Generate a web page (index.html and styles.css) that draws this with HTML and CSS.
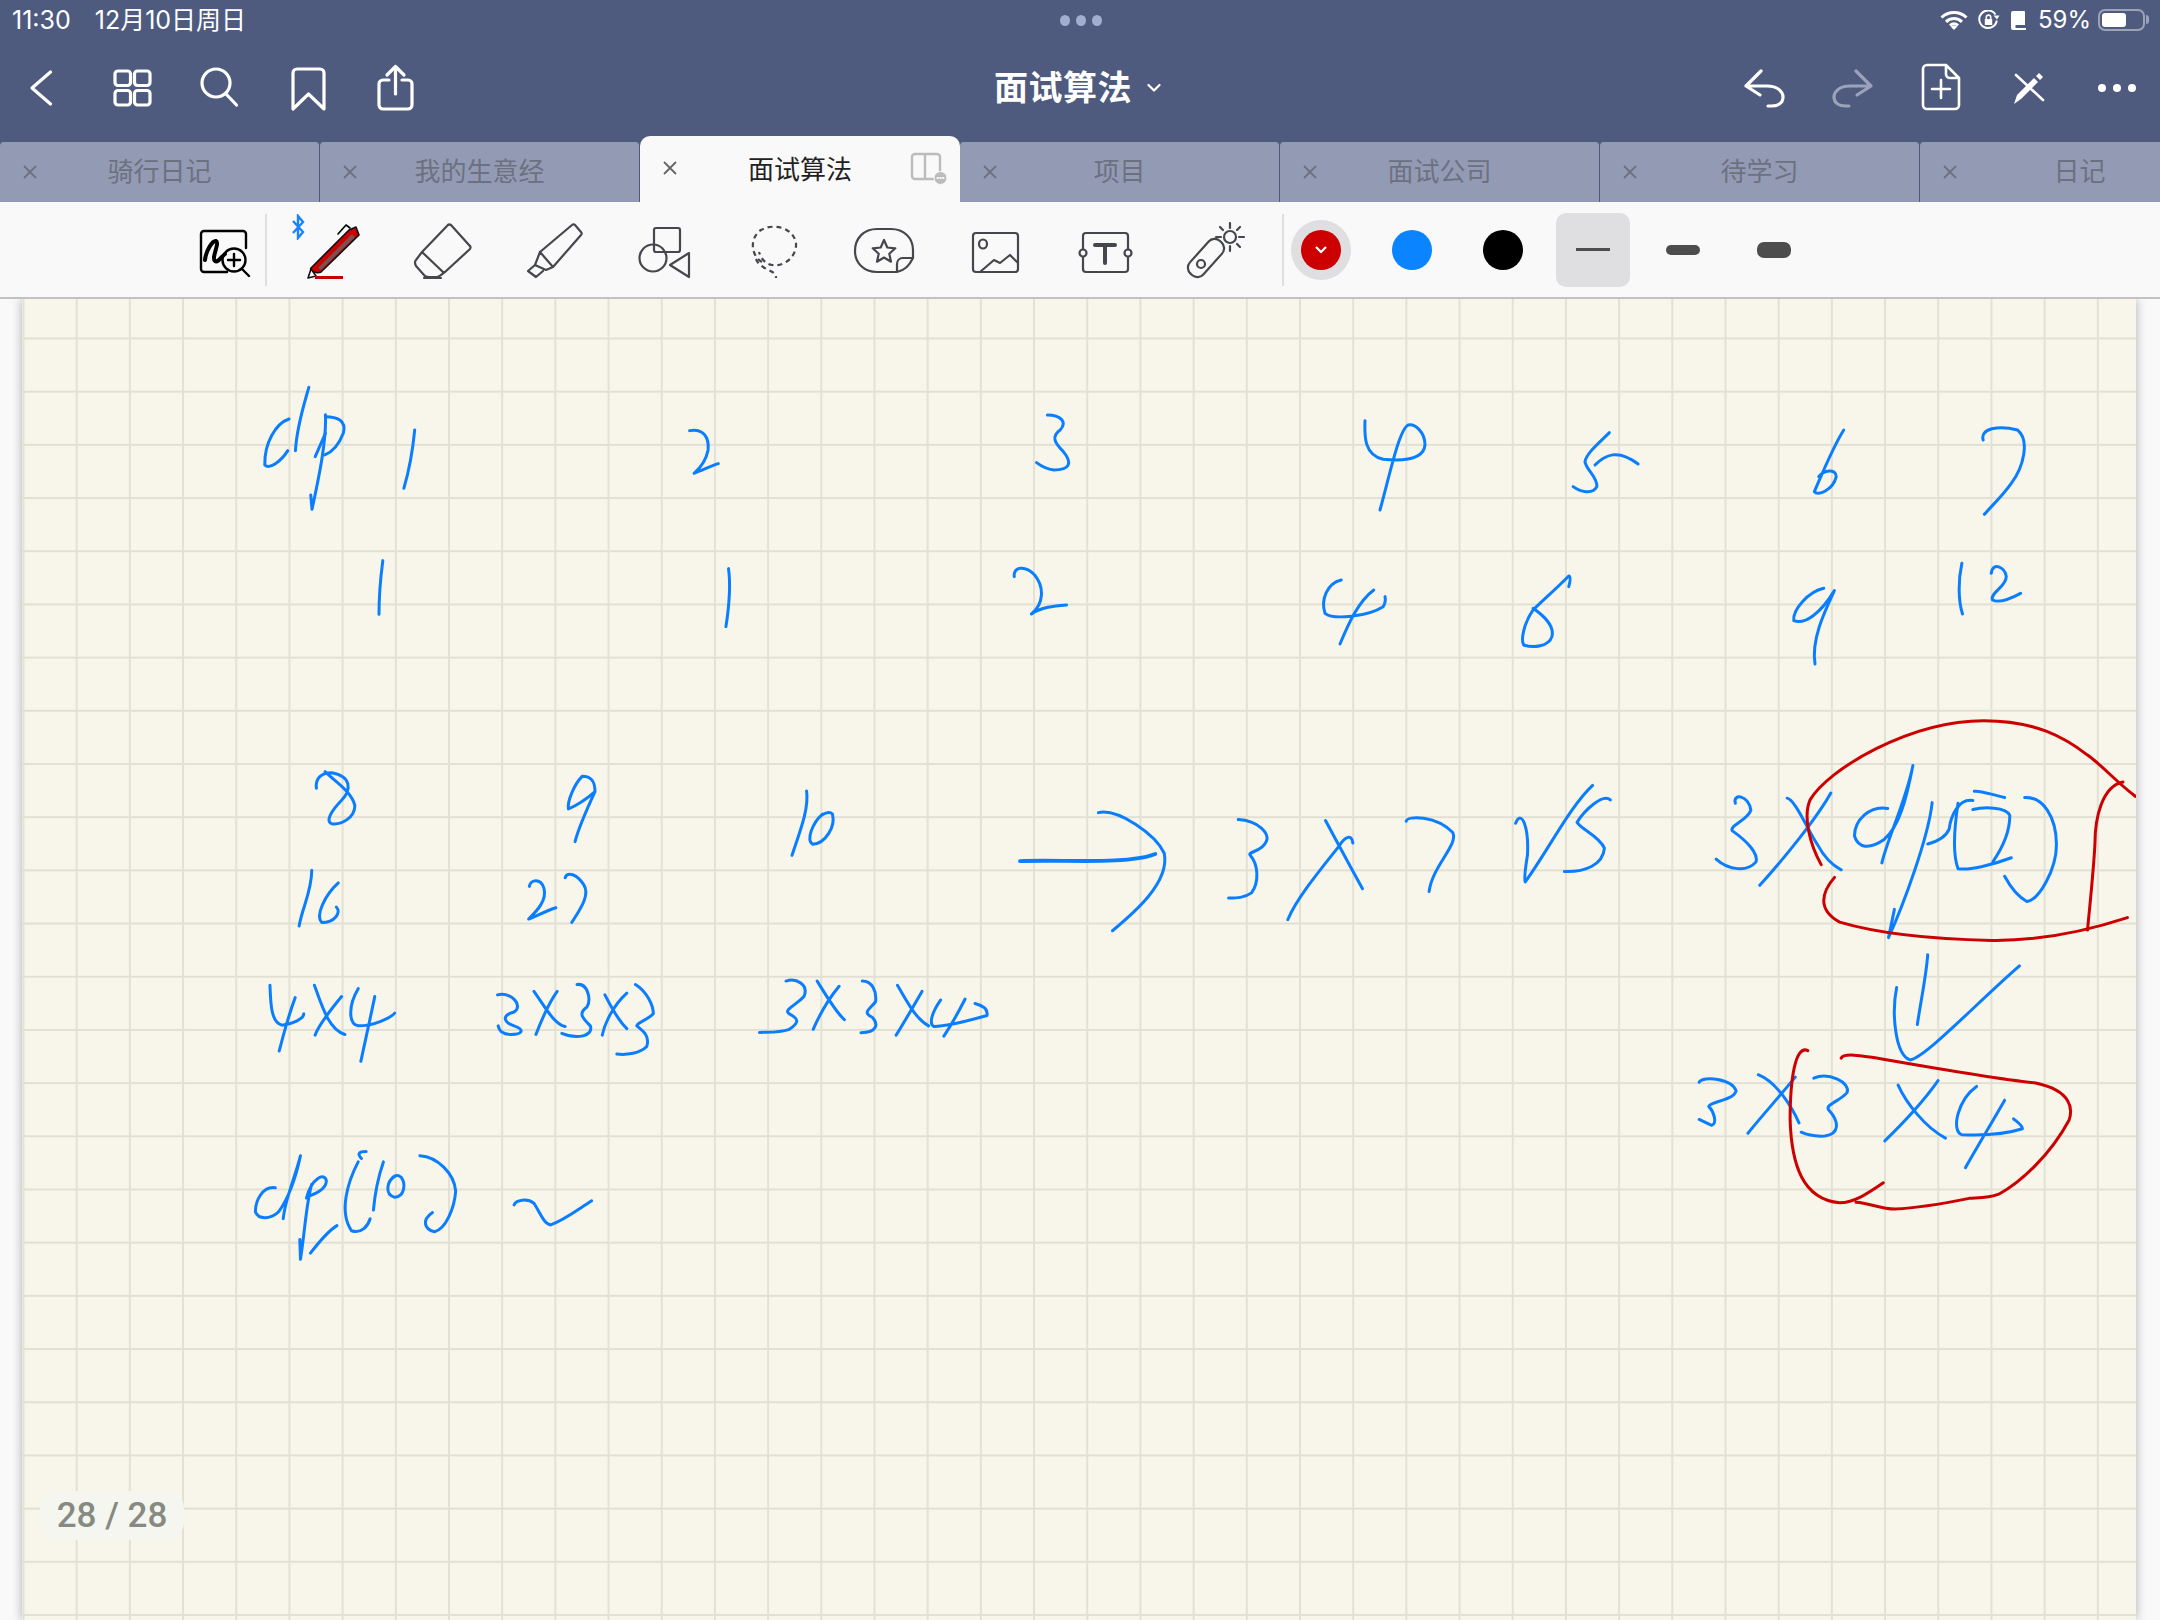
FILE: index.html
```html
<!DOCTYPE html>
<html lang="zh-CN">
<head>
    <meta charset="UTF-8">
    <title>面试算法</title>
    <link rel="stylesheet" href="styles.css">
</head>
<body>
    <header class="appbar">
        <div class="statusbar">
            <div class="status-left"><span>11:30</span><span>12月10日周日</span></div>
            <div class="status-dots"><i></i><i></i><i></i></div>
            <div class="status-right">
                <svg class="st-wifi" width="28" height="20" viewBox="0 0 28 20"><path d="M1.500 7.500C8.500 .8 19.500 .8 26.500 7.500M6 11.800C10.500 7.500 17.500 7.500 22 11.800M10 15.500C12.500 13.300 15.500 13.300 18 15.500"/><path class="solid" d="M14 20l-3.200-3.300c1.900-1.500 4.500-1.500 6.400 0z"/></svg>
                <svg class="st-lock" width="22" height="20" viewBox="0 0 22 20"><path class="mid" d="M17.500 4.500A8.800 8.800 0 1 0 18.800 10.500"/><path class="solid" d="M15.500 5.500h6l-2.500 4zM6.800 9h7.400v6H6.800z"/><path class="thin" d="M8.300 9V7.300a2.200 2.200 0 0 1 4.400 0V9"/></svg>
                <svg class="st-book" width="16" height="19" viewBox="0 0 16 19"><path class="solid" d="M2 0h11a1 1 0 0 1 1 1v13H4.500v3H15v2H2a2 2 0 0 1-2-2V2a2 2 0 0 1 2-2z"/></svg>
                <span class="st-pct">59%</span>
                <div class="battery"><div class="battery-fill"></div></div>
            </div>
        </div>

        <nav class="navbar">
            <div class="nav-left">
                <svg class="nav-icon nav-back" viewBox="0 0 60 60"><path d="M39.500 14L21 30l18.500 16"/></svg>
                <svg class="nav-icon" viewBox="0 0 60 60"><rect x="13" y="13" width="15.500" height="14.500" rx="3"/><rect x="32.500" y="13" width="15.500" height="14.500" rx="3"/><rect x="13" y="32.500" width="15.500" height="14.500" rx="3"/><rect x="32.500" y="32.500" width="15.500" height="14.500" rx="3"/></svg>
                <svg class="nav-icon" viewBox="0 0 60 60"><circle cx="26" cy="25" r="14"/><path d="M36 36l10.500 11"/></svg>
                <svg class="nav-icon" viewBox="0 0 60 60"><path d="M15 51V15a4 4 0 0 1 4-4h23a4 4 0 0 1 4 4v36L30.500 36z"/></svg>
                <svg class="nav-icon" viewBox="0 0 60 60"><path d="M23 22h-6a4 4 0 0 0-4 4v21a4 4 0 0 0 4 4h25a4 4 0 0 0 4-4V26a4 4 0 0 0-4-4h-6M29.500 36V9M21 17l8.500-8.500L38 17"/></svg>
            </div>
            <div class="nav-title">
                <span>面试算法</span>
                <svg class="nav-chevron" width="14" height="10" viewBox="0 0 14 10"><path d="M1.500 2L7 7.500 12.500 2"/></svg>
            </div>
            <div class="nav-right">
                <svg class="nav-icon" viewBox="0 0 60 60"><path d="M26 13L11 28l14 9M11 28h21c11 0 16 6 16 11 0 6-5 9-12 9h-3"/></svg>
                <svg class="nav-icon is-off" viewBox="0 0 60 60"><path d="M33 13l15 15-14 9M48 28H27C16 28 11 34 11 39c0 6 5 9 12 9h3"/></svg>
                <svg class="nav-icon nav-thin" viewBox="0 0 60 60"><path d="M16 7h19l13 13v27a4 4 0 0 1-4 4H16a4 4 0 0 1-4-4V11a4 4 0 0 1 4-4zM35 7v9a4 4 0 0 0 4 4h9M21 31h18M30 22v18"/></svg>
                <svg class="nav-icon nav-thin" viewBox="0 0 60 60"><path d="M17 17l27 25"/><path class="solid" d="M15 46l3-9 17-17 4 4-17 17zM37 18l3-3 4 4-3 3z"/></svg>
                <svg class="nav-icon" viewBox="0 0 60 60"><circle class="solid" cx="15" cy="30" r="4"/><circle class="solid" cx="30" cy="30" r="4"/><circle class="solid" cx="45" cy="30" r="4"/></svg>
            </div>
        </nav>

        <div class="tabs">
            <div class="tab"><svg class="tab-x" viewBox="0 0 14 14"><path d="M1 1l12 12M13 1L1 13"/></svg><span>骑行日记</span></div>
            <div class="tab"><svg class="tab-x" viewBox="0 0 14 14"><path d="M1 1l12 12M13 1L1 13"/></svg><span>我的生意经</span></div>
            <div class="tab active">
                <svg class="tab-x" viewBox="0 0 14 14"><path d="M1 1l12 12M13 1L1 13"/></svg>
                <span>面试算法</span>
                <svg class="tab-split" width="40" height="34" viewBox="0 0 40 34"><path d="M8 2h22a3 3 0 0 1 3 3v16M18 2v25H8a3 3 0 0 1-3-3V5a3 3 0 0 1 3-3M18 27h9"/><circle class="solid" cx="33.500" cy="26" r="6.500"/><path class="dots" d="M30.500 26h.5M33.300 26h.5M36 26h.5"/></svg>
            </div>
            <div class="tab"><svg class="tab-x" viewBox="0 0 14 14"><path d="M1 1l12 12M13 1L1 13"/></svg><span>项目</span></div>
            <div class="tab"><svg class="tab-x" viewBox="0 0 14 14"><path d="M1 1l12 12M13 1L1 13"/></svg><span>面试公司</span></div>
            <div class="tab"><svg class="tab-x" viewBox="0 0 14 14"><path d="M1 1l12 12M13 1L1 13"/></svg><span>待学习</span></div>
            <div class="tab"><svg class="tab-x" viewBox="0 0 14 14"><path d="M1 1l12 12M13 1L1 13"/></svg><span>日记</span></div>
        </div>
    </header>

    <div class="toolbar">
        <svg class="tool zoom-tool" viewBox="0 0 70 80">
            <path class="k" d="M38 60H15a3 3 0 0 1-3-3V22a3 3 0 0 1 3-3h39a3 3 0 0 1 3 3v14"/>
            <path class="k fat" d="M16 48c1-10 8-20 11-19 4 2-5 17-1 20 3 2 6-4 10-7"/>
            <circle class="k" cx="45" cy="48" r="11.500"/>
            <path class="k" d="M53 57l7 7M45 42v12M39 48h12"/>
        </svg>
        <div class="bar-divider"></div>
        <div class="tool-group">
            <div class="pen-slot">
                <svg class="bt-badge" width="14" height="26" viewBox="0 0 14 26"><path d="M2 7l10 11-5 6V2l5 6L2 19"/></svg>
                <svg class="tool" viewBox="0 0 70 80">
                    <path class="pen-body" d="M13 56L51 18l7-3 3 8-38 37c-4 2-12-1-10-4z"/>
                    <path class="pen-side" d="M20 56L54 22l3 3-34 33z"/>
                    <path class="pen-tip" d="M13 57l-3 9 8-2z"/>
                    <path class="k thin" d="M40 22l8-9 4 3"/>
                    <path class="pen-line" d="M17 65.500h28"/>
                </svg>
            </div>
            <svg class="tool" viewBox="0 0 70 80"><path d="M14 40L39 14a3 3 0 0 1 4-1l18 20a3 3 0 0 1 1 4L37 60a2 2 0 0 1-2 0zM14 40l-6 8c-2 2-1 4 0 6l8 9c1 2 3 2 5 2h8c2 0 3-1 8-5M16 66h17"/></svg>
            <svg class="tool" viewBox="0 0 70 80"><path d="M21 40L53 13a2 2 0 0 1 3 0l6 7a2 2 0 0 1 0 3L34 55zM21 40l-5 13 11 5 7-3M16 53l-7 6 8 6 7-6"/></svg>
            <svg class="tool" viewBox="0 0 70 80"><rect x="25" y="16" width="26" height="24" rx="2"/><circle cx="24" cy="46" r="13.500"/><path d="M60 41L41 53l19 12z"/></svg>
            <svg class="tool" viewBox="0 0 70 80"><path class="dash" d="M23 50C12 44 10 26 22 18 34 11 54 15 57 31 58 44 46 55 33 53 26 52 22 46 20 40"/><path class="dash" d="M17 47c3 8 12 10 18 14 2 1 2 3 2 5"/></svg>
            <svg class="tool" viewBox="0 0 70 80"><path d="M28 17h14c13 0 22 9 22 21v8C60 54 56 58 48 60H28C15 60 6 51 6 39 6 26 15 17 28 17zM64 46H54c-4 0-6 3-6 6v8"/><path d="M35 28l3.300 7.500 8 .8-6 5.400 1.700 8-7-4.200-7 4.200 1.700-8-6-5.400 8-.8z"/></svg>
            <svg class="tool" viewBox="0 0 70 80"><rect x="13" y="21" width="45" height="39" rx="3"/><ellipse cx="23" cy="32" rx="4" ry="4.500"/><path d="M20 60l14-12 6 3 10-8 7 7"/></svg>
            <svg class="tool" viewBox="0 0 70 80"><path d="M13 37V24a3 3 0 0 1 3-3h39a3 3 0 0 1 3 3v13M13 45v12a3 3 0 0 0 3 3h39a3 3 0 0 0 3-3V45"/><circle cx="13" cy="41" r="3.500"/><circle cx="58" cy="41" r="3.500"/><path class="fat" d="M25 33h20M35 33v18"/></svg>
            <svg class="tool" viewBox="0 0 70 80"><rect x="-9" y="-22" width="18" height="44" rx="8" transform="translate(26 46) rotate(42)"/><circle cx="21" cy="52" r="4"/><circle cx="50" cy="25" r="6"/><path d="M50 11v5M50 34v5M36 25h5M59 25h5M40 15l3 3M60 15l-3 3M60 35l-3-3"/></svg>
        </div>
        <div class="bar-divider divider-end"></div>
        <div class="swatches">
            <div class="swatch-slot selected"><div class="swatch red"><svg width="14" height="10" viewBox="0 0 14 10"><path d="M2 2l5 5 5-5"/></svg></div></div>
            <div class="swatch-slot"><div class="swatch blue"></div></div>
            <div class="swatch-slot"><div class="swatch black"></div></div>
        </div>
        <div class="strokes">
            <div class="stroke-btn selected"><div class="stroke s1"></div></div>
            <div class="stroke-btn"><div class="stroke s2"></div></div>
            <div class="stroke-btn"><div class="stroke s3"></div></div>
        </div>
    </div>

    <main class="page-area">
        <div class="paper">
            <svg class="ink" width="2114" height="1321" viewBox="22 299 2114 1321">
                <g class="blue" transform="translate(180 200) scale(.6378 .3333)">
                    <path d="M171 657C150 670 132 730 133 795C140 810 158 785 169 752"/>
                    <path d="M202 562C195 610 183 680 181 752"/>
                    <path d="M228 644C230 720 218 830 207 928L205 885"/>
                    <path d="M228 650C245 650 262 660 256 700C250 730 240 755 227 765M212 770L228 700"/>
                    <path d="M368 690C365 750 358 820 351 865"/>
                    <path d="M799 692C820 685 830 710 828 750C825 780 815 805 806 820C820 810 832 798 844 791"/>
                    <path d="M1360 645C1380 645 1392 665 1380 690C1365 710 1372 730 1385 755C1400 790 1395 810 1370 810C1358 808 1350 798 1343 788"/>
                    <path d="M318 1082C314 1140 312 1200 312 1243"/>
                    <path d="M860 1106C864 1160 860 1230 856 1280"/>
                    <path d="M1308 1130C1306 1100 1325 1095 1340 1125C1355 1160 1355 1210 1335 1242C1350 1222 1370 1218 1390 1215"/>
                </g>
                <g class="blue" transform="translate(1180 380) scale(.625 .3333)">
                    <path d="M296 122C295 170 295 225 325 238C365 245 390 235 392 195C392 155 375 130 365 135C350 150 335 290 320 390"/>
                    <path d="M687 158C670 190 650 220 648 245C650 270 668 290 667 320C660 345 640 335 629 320M664 255C680 225 700 205 733 252"/>
                    <path d="M1062 150C1045 200 1030 270 1015 335C1020 350 1045 330 1050 290C1050 265 1030 270 1022 290"/>
                    <path d="M1285 180C1280 145 1310 135 1340 150C1360 180 1350 260 1330 310C1315 350 1295 385 1287 403"/>
                    <path d="M258 600C235 610 225 660 232 700C245 720 300 710 325 680C330 665 328 650 328 650M310 630C285 665 270 730 256 792"/>
                    <path d="M622 620C625 600 625 590 622 588C600 630 575 670 565 690C550 730 545 780 550 795C565 805 590 800 595 770C600 735 580 705 565 685"/>
                    <path d="M1030 625C1005 635 980 690 982 722C1000 735 1025 700 1047 632C1030 700 1010 780 1016 852"/>
                    <path d="M1251 550C1245 600 1245 660 1252 702"/>
                    <path d="M1298 580C1300 545 1320 560 1322 590C1322 620 1295 640 1300 660C1310 670 1330 655 1345 640"/>
                </g>
                <g class="blue" transform="translate(0 740) scale(.6633 .3444)">
                    <path d="M490 92C505 120 530 150 535 190C535 225 515 247 500 243C490 235 500 205 515 175C530 145 530 105 500 95C485 95 475 110 477 140"/>
                    <path d="M897 150C897 130 895 105 878 105C865 130 855 180 857 200C870 190 885 170 897 150C885 200 873 250 867 295"/>
                    <path d="M1216 148C1220 200 1205 270 1194 335"/>
                    <path d="M1240 215C1225 240 1215 290 1225 303C1245 300 1260 250 1255 215C1250 205 1240 215 1235 225"/>
                    <path d="M470 378C470 440 455 490 451 540"/>
                    <path d="M510 415C490 450 475 510 485 530C505 530 515 500 507 485"/>
                    <path d="M798 425C800 405 815 400 820 430C825 465 810 495 797 520C810 510 825 495 838 487"/>
                    <path d="M852 400C855 380 870 390 880 420C890 450 875 490 862 530"/>
                    <path d="M407 712C408 760 408 820 425 828C440 825 458 810 458 795M445 748C435 800 428 850 421 903"/>
                    <path d="M474 712C485 770 495 840 520 855M515 745C500 780 480 830 475 857"/>
                    <path d="M540 722C525 770 525 825 540 830C565 830 590 805 595 793M565 745C558 810 550 880 544 933"/>
                    <path d="M750 740C770 730 790 770 775 790C755 800 760 820 775 830C790 840 790 855 770 855C755 855 752 840 751 830"/>
                    <path d="M805 730C820 770 835 825 852 832M840 730C825 770 815 820 808 855"/>
                    <path d="M870 710C885 705 892 750 885 775C870 795 880 810 890 830C895 860 870 870 847 852"/>
                    <path d="M912 740C920 770 930 810 945 838M945 735C925 770 912 820 908 857"/>
                    <path d="M958 710C975 730 985 770 985 795C975 815 960 820 960 830C970 845 980 860 975 890C965 910 945 915 930 912"/>
                    <path d="M1185 700C1200 690 1220 710 1212 745C1200 770 1180 785 1190 795C1205 810 1205 820 1190 840C1175 850 1160 848 1145 849"/>
                    <path d="M1232 700C1245 740 1260 790 1273 812M1265 715C1250 750 1235 800 1226 840"/>
                    <path d="M1300 700C1315 700 1322 730 1320 760C1310 785 1300 790 1315 805C1325 825 1322 850 1298 850"/>
                    <path d="M1353 712C1365 750 1380 810 1400 830M1390 730C1375 780 1360 830 1351 857"/>
                    <path d="M1418 755C1405 790 1400 825 1408 832C1430 830 1460 815 1488 800C1490 780 1480 770 1470 765M1455 752C1445 790 1435 825 1423 860"/>
                    <path d="M415 1300C395 1295 385 1340 385 1370C390 1395 410 1390 420 1370C435 1330 445 1280 453 1207C445 1270 430 1330 427 1390"/>
                    <path d="M470 1290C462 1340 460 1420 453 1508L452 1450M462 1330C470 1270 490 1255 492 1280C492 1300 480 1315 465 1325"/>
                    <path d="M468 1490C480 1460 495 1425 508 1410"/>
                    <path d="M552 1195C538 1195 540 1205 545 1215M540 1225C525 1280 510 1370 530 1425C545 1435 555 1410 558 1390"/>
                    <path d="M578 1225C570 1270 565 1320 563 1365"/>
                    <path d="M597 1265C582 1280 580 1320 595 1328C610 1325 612 1290 605 1270C600 1262 595 1265 592 1270"/>
                    <path d="M633 1207C660 1210 685 1260 687 1310C685 1360 672 1420 655 1428C640 1420 635 1395 652 1372"/>
                    <path d="M775 1350C778 1335 795 1330 805 1345C815 1375 820 1405 830 1408C850 1395 870 1365 892 1338"/>
                </g>
                <g class="blue" transform="translate(1000 700) scale(.7398 .3444)">
                    <path class="bold" d="M27 468C80 462 170 480 210 447"/>
                    <path d="M133 327C160 315 210 390 222 445C230 530 180 620 152 670"/>
                    <path d="M322 347C350 350 365 390 360 410C355 440 335 440 338 450C350 480 350 530 340 560C330 575 320 575 309 575"/>
                    <path d="M440 350C455 410 475 490 490 548M477 415C475 385 465 400 458 425C430 500 400 580 389 638"/>
                    <path d="M549 352C550 335 590 335 612 385C620 420 585 480 580 556"/>
                    <path d="M697 358C705 315 715 370 713 450C710 490 708 520 710 528C740 440 770 310 801 248"/>
                    <path d="M825 290C815 270 790 320 780 355C785 375 810 395 817 430C815 480 790 500 763 498"/>
                    <path d="M994 300C990 270 1012 275 1015 320C1010 350 985 365 990 380C1010 410 1025 445 1022 470C1010 500 985 495 968 462"/>
                    <path d="M1064 285C1075 290 1090 370 1105 420C1115 460 1125 480 1137 493M1123 270C1105 340 1060 460 1027 538"/>
                    <path d="M1200 315C1175 305 1155 350 1155 395C1160 430 1175 435 1195 405C1215 370 1225 290 1234 190C1225 290 1200 400 1192 473"/>
                    <path d="M1260 298C1255 400 1220 600 1201 690L1209 608"/>
                    <path d="M1315 292C1295 285 1285 340 1283 375C1278 400 1265 412 1254 418"/>
                    <path d="M1317 265C1325 262 1340 275 1358 283M1315 318C1330 310 1360 310 1365 335C1365 380 1355 430 1342 470M1295 300C1290 370 1288 450 1295 490C1310 495 1340 480 1367 458"/>
                    <path d="M1385 283C1410 280 1428 340 1428 420C1428 490 1405 580 1388 585C1375 570 1365 540 1358 512"/>
                    <path d="M1254 740C1252 800 1245 870 1240 942"/>
                    <path d="M1212 835C1205 910 1210 1030 1230 1045C1250 1040 1320 880 1378 772"/>
                    <path d="M945 1110C950 1090 990 1100 995 1135C990 1165 960 1165 958 1180C965 1195 970 1230 962 1235L945 1218"/>
                    <path d="M1025 1088C1050 1110 1070 1180 1080 1228M1075 1095C1050 1160 1025 1220 1011 1258"/>
                    <path d="M1100 1098C1120 1080 1150 1110 1145 1140C1135 1165 1115 1175 1120 1190C1135 1225 1135 1260 1115 1266C1100 1268 1090 1262 1083 1255"/>
                    <path d="M1214 1118C1225 1170 1250 1240 1278 1272M1268 1105C1250 1160 1220 1230 1196 1280"/>
                    <path d="M1320 1122C1295 1160 1285 1250 1300 1262C1330 1265 1360 1260 1382 1245C1382 1235 1375 1225 1370 1216M1358 1162C1340 1230 1320 1300 1305 1358"/>
                </g>
                <g class="red" transform="translate(1000 700) scale(.7398 .3444)">
                    <path d="M1110 478C1095 420 1085 340 1095 290C1120 200 1230 60 1330 60C1400 60 1440 110 1470 160C1490 190 1510 240 1535 280"/>
                    <path d="M1128 515C1110 560 1105 610 1135 645C1190 680 1270 695 1340 698C1410 700 1470 670 1524 632"/>
                    <path d="M1518 238C1490 250 1480 340 1480 420C1478 500 1473 600 1470 668"/>
                    <path d="M1092 1018C1075 1000 1068 1100 1068 1220C1070 1350 1085 1450 1135 1460C1155 1460 1175 1430 1194 1402"/>
                    <path d="M1137 1040C1140 1025 1160 1030 1200 1045C1280 1075 1370 1105 1400 1112C1450 1135 1450 1190 1445 1220C1420 1320 1380 1400 1350 1435C1335 1448 1320 1445 1310 1447C1280 1460 1240 1475 1210 1478C1190 1478 1175 1460 1157 1458"/>
                </g>
            </svg>
            <div class="page-num">28 / 28</div>
        </div>
    </main>
</body>
</html>
```

FILE: styles.css
```css
* {
    box-sizing: border-box;
}
html, body {
    margin: 0;
    padding: 0;
}
body {
    width: 2160px;
    height: 1620px;
    overflow: hidden;
    display: flex;
    flex-direction: column;
    background: #f9f9f9;
    font-family: Inter, "Noto Sans CJK SC", sans-serif;
}
svg {
    display: block;
    flex: none;
}

/* top blue part */
.appbar {
    background: #4e5b7f;
    color: #fff;
}
.statusbar {
    height: 40px;
    padding: 0 11px 0 12px;
    display: grid;
    grid-template-columns: 1fr auto 1fr;
    align-items: center;
    font-size: 25px;
    line-height: 40px;
}
.status-left {
    display: flex;
    gap: 24px;
}
.status-dots {
    display: flex;
    gap: 6px;
}
.status-dots i {
    width: 10px;
    height: 11px;
    border-radius: 50%;
    background: #a2aed0;
}
.status-right {
    display: flex;
    align-items: center;
    justify-content: flex-end;
}
.status-right svg path {
    fill: none;
    stroke: #fff;
    stroke-width: 3;
}
.status-right svg path.solid {
    fill: #fff;
    stroke: none;
}
.status-right svg path.mid {
    stroke-width: 2;
}
.status-right svg path.thin {
    stroke-width: 1.6;
}
.st-lock {
    margin-left: 10px;
}
.st-book {
    margin-left: 11px;
}
.st-pct {
    margin-left: 11px;
    font-size: 24px;
}
.battery {
    width: 47px;
    height: 22px;
    margin-left: 7px;
    margin-right: 4px;
    padding: 2px;
    border: 2px solid #9aa3b8;
    border-radius: 7px;
    position: relative;
}
.battery::after {
    content: "";
    position: absolute;
    right: -6px;
    top: 4px;
    width: 3px;
    height: 9px;
    border-radius: 0 3px 3px 0;
    background: #9aa3b8;
}
.battery-fill {
    width: 24px;
    height: 100%;
    border-radius: 3px;
    background: #fff;
}

.navbar {
    height: 96px;
    display: grid;
    grid-template-columns: 1fr auto 1fr;
    align-items: center;
}
.nav-left {
    display: flex;
    gap: 28px;
    padding-left: 11px;
}
.nav-back {
    margin-right: 3px;
}
.nav-right {
    display: flex;
    gap: 28px;
    justify-content: flex-end;
    padding-right: 13px;
}
.nav-icon {
    width: 60px;
    height: 60px;
    fill: none;
    stroke: #fff;
    stroke-width: 3.2;
    stroke-linecap: round;
    stroke-linejoin: round;
}
.nav-icon .solid {
    fill: #fff;
    stroke: none;
}
.nav-thin {
    stroke-width: 2.6;
}
.is-off {
    stroke: #9aa3b8;
}
.nav-title {
    display: flex;
    align-items: center;
    gap: 15px;
    font-size: 34px;
    font-weight: 700;
    line-height: 40px;
    letter-spacing: .5px;
    padding-bottom: 1px;
    margin-right: 5px;
}
.nav-chevron {
    fill: none;
    stroke: #fff;
    stroke-width: 2.2;
    stroke-linecap: round;
    stroke-linejoin: round;
    margin-top: 1px;
}

.tabs {
    height: 66px;
    display: flex;
    align-items: flex-end;
    overflow: hidden;
}
.tab {
    flex: none;
    width: 320px;
    height: 60px;
    display: grid;
    grid-template-columns: 60px 1fr 60px;
    align-items: center;
    justify-items: center;
    background: #939bb4;
    border-right: 1px solid #4e5b7f;
    border-radius: 4px 4px 0 0;
    color: #6c7182;
    font-size: 26px;
    line-height: 60px;
}
.tab-x {
    width: 14px;
    height: 14px;
    fill: none;
    stroke: #6c7182;
    stroke-width: 1.8;
}
.tab.active {
    height: 66px;
    border-right: 0;
    border-radius: 10px 10px 0 0;
    background: #f9f9f9;
    color: #222;
    line-height: 66px;
}
.tab.active .tab-x {
    stroke: #666;
    margin-top: -3px;
}
.tab.active span {
    margin-top: 1px;
}
.tab-split {
    margin-top: -2px;
    margin-right: 7px;
    fill: none;
    stroke: #bcbcbc;
    stroke-width: 2.4;
}
.tab-split .solid {
    fill: #bcbcbc;
    stroke: #f9f9f9;
    stroke-width: 1;
}
.tab-split .dots {
    stroke: #f9f9f9;
    stroke-width: 2;
    stroke-linecap: round;
}

/* tools */
.toolbar {
    flex: none;
    height: 97px;
    display: flex;
    align-items: center;
    padding-left: 189px;
    background: #f9f9f9;
    border-bottom: 2px solid #c2c2c2;
    position: relative;
    z-index: 2;
}
.tool {
    width: 70px;
    height: 80px;
    margin-top: 4px;
    fill: none;
    stroke: #45474c;
    stroke-width: 2.2;
    stroke-linecap: round;
    stroke-linejoin: round;
}
.tool .k {
    stroke: #000;
    stroke-width: 2.4;
}
.tool .k.thin {
    stroke-width: 1.6;
}
.tool .fat {
    stroke-width: 4;
}
.tool .k.fat {
    stroke-width: 4;
}
.tool .dash {
    stroke-dasharray: 5 4;
    stroke-linecap: butt;
}
.zoom-tool {
    margin-right: 6px;
}
.bar-divider {
    width: 2px;
    height: 72px;
    background: #dedede;
}
.tool-group {
    display: flex;
    align-items: center;
    gap: 40.3px;
    margin-left: 31px;
}
.pen-slot {
    position: relative;
}
.bt-badge {
    position: absolute;
    left: -7px;
    top: 6px;
    fill: none;
    stroke: #1a84ff;
    stroke-width: 2.4;
}
.tool .pen-body {
    fill: #cc0000;
    stroke: #111;
    stroke-width: 1.6;
}
.tool .pen-side {
    fill: #7a5050;
    stroke: none;
}
.tool .pen-tip {
    fill: #fff;
    stroke: #111;
    stroke-width: 1.6;
}
.tool .pen-line {
    stroke: #cc0000;
    stroke-width: 3;
    stroke-linecap: butt;
}
.divider-end {
    margin-left: 31.5px;
}
.swatches {
    display: flex;
    gap: 31px;
    margin-left: 7px;
}
.swatch-slot {
    width: 60px;
    height: 60px;
    border-radius: 50%;
    display: flex;
    align-items: center;
    justify-content: center;
}
.swatch-slot.selected {
    background: #dfdfe2;
}
.swatch {
    width: 40px;
    height: 40px;
    border-radius: 50%;
    display: flex;
    align-items: center;
    justify-content: center;
}
.swatch svg {
    fill: none;
    stroke: #fff;
    stroke-width: 2.2;
}
.swatch.red {
    background: #cc0000;
}
.swatch.blue {
    background: #0a84ff;
}
.swatch.black {
    background: #000;
}
.strokes {
    display: flex;
    gap: 16.5px;
    margin-left: 23px;
}
.stroke-btn {
    width: 74px;
    height: 74px;
    border-radius: 10px;
    display: flex;
    align-items: center;
    justify-content: center;
}
.stroke-btn.selected {
    background: #dfdfe2;
}
.stroke {
    width: 34px;
    background: #4d4d4d;
}
.s1 {
    height: 3px;
}
.s2 {
    height: 10px;
    border-radius: 5px;
}
.s3 {
    height: 16px;
    border-radius: 7px;
}

/* paper */
.page-area {
    flex: 1;
    padding: 0 24px 0 22px;
    overflow: hidden;
}
.paper {
    height: 1321px;
    position: relative;
    overflow: hidden;
    background-color: #f8f6ea;
    background-image:
        linear-gradient(to right, #e3e1d4 2px, transparent 2px),
        linear-gradient(to bottom, #e2e0d2 2px, transparent 2px);
    background-size: 53.2px 53.2px;
    background-position: .5px 38.5px;
    box-shadow: 0 0 10px rgba(0, 0, 0, .3);
}
.ink {
    position: absolute;
    left: 0;
    top: 0;
}
.ink path {
    fill: none;
    stroke-width: 3;
    stroke-linecap: round;
    stroke-linejoin: round;
    vector-effect: non-scaling-stroke;
}
.ink .blue path {
    stroke: #0a7eff;
}
.ink .blue path.bold {
    stroke-width: 3.8;
}
.ink .red path {
    stroke: #cc0000;
    stroke-width: 3;
}
.page-num {
    position: absolute;
    left: 18px;
    bottom: 80px;
    width: 144px;
    height: 49px;
    border-radius: 18px;
    background: #f5f6ef;
    color: #868a82;
    font-family: Roboto, sans-serif;
    font-size: 35px;
    font-weight: 500;
    line-height: 49px;
    text-align: center;
}
```
